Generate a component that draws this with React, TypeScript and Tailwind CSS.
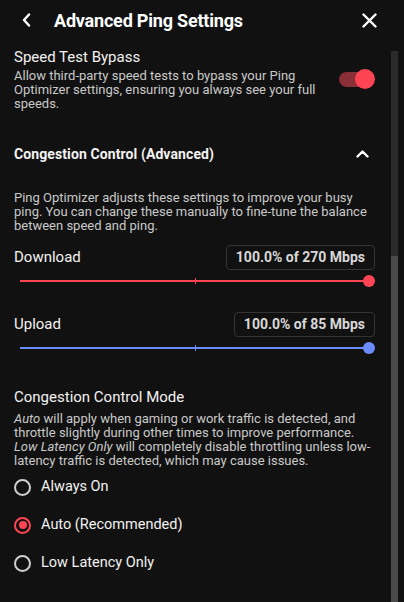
import { useState } from "react";

function Slider({ color }: { color: string }) {
  return (
    <div className="relative mt-[5px] h-[12px] ml-[6px] mr-[8px]">
      <div className="absolute left-0 right-0 top-[5px] h-[2px]" style={{ background: color }} />
      <div className="absolute left-1/2 top-[3px] h-[6px] w-[1px]" style={{ background: color }} />
      <div className="absolute -right-[6px] top-0 h-[12px] w-[12px] rounded-full" style={{ background: color }} />
    </div>
  );
}

function Radio({ label, checked, onClick }: { label: string; checked: boolean; onClick: () => void }) {
  return (
    <button onClick={onClick} className="flex h-[38px] items-center gap-[10px] text-left">
      <span
        className={
          checked
            ? "flex h-[17px] w-[17px] items-center justify-center rounded-full border-2 border-[#ff4554]"
            : "flex h-[17px] w-[17px] items-center justify-center rounded-full border-2 border-[#cfcfcf]"
        }
      >
        {checked && <span className="h-[8px] w-[8px] rounded-full bg-[#ff4554]" />}
      </span>
      <span className="text-[14.5px] text-[#f2f2f2]">{label}</span>
    </button>
  );
}

export default function App() {
  const [mode, setMode] = useState("auto");
  return (
    <div className="flex h-[602px] w-[404px] flex-col overflow-hidden bg-[#121111] font-['Roboto',sans-serif] text-white">
      <div className="flex h-[40px] shrink-0 items-center pl-[22px] pr-[27px]">
        <svg width="9" height="14" viewBox="0 0 9 14" fill="none" stroke="white" strokeWidth="2.4" strokeLinecap="round" strokeLinejoin="round">
          <path d="M7 1.5 L2 7 L7 12.5" />
        </svg>
        <h1 className="ml-[23px] flex-1 text-[18px] font-bold tracking-[-0.2px] text-white">Advanced Ping Settings</h1>
        <svg width="15" height="15" viewBox="0 0 15 15" fill="none" stroke="white" strokeWidth="2.4" strokeLinecap="round">
          <path d="M1.5 1.5 L13.5 13.5 M13.5 1.5 L1.5 13.5" />
        </svg>
      </div>

      <div className="flex min-h-0 flex-1">
        <div className="flex-1 pl-[14px] pr-[14px] pt-[7px]">
          <div className="flex items-center">
            <div className="w-[318px]">
              <div className="text-[15px] leading-[20px] text-[#f2f2f2]">Speed Test Bypass</div>
              <p className="mt-[2px] text-[13px] leading-[14px] text-[#c9c9c9]">
                Allow third-party speed tests to bypass your Ping Optimizer settings, ensuring you always see your full speeds.
              </p>
            </div>
            <div className="relative ml-[7px] h-[20px] w-[38px]">
              <div className="absolute left-0 top-[3px] h-[15px] w-[34px] rounded-full bg-[#8a2e37]" />
              <div className="absolute right-[2px] top-0 h-[20px] w-[20px] rounded-full bg-[#ff4554]" />
            </div>
          </div>

          <div className="mt-[33px] flex items-center justify-between pr-[8px]">
            <div className="text-[14px] font-bold leading-[20px] tracking-[0.1px] text-[#f2f2f2]">Congestion Control (Advanced)</div>
            <svg width="13" height="8" viewBox="0 0 13 8" fill="none" stroke="white" strokeWidth="2.4" strokeLinecap="round" strokeLinejoin="round">
              <path d="M1.5 6.5 L6.5 1.5 L11.5 6.5" />
            </svg>
          </div>

          <p className="mt-[27px] text-[13px] leading-[14px] text-[#c9c9c9]">
            Ping Optimizer adjusts these settings to improve your busy ping. You can change these manually to fine-tune the balance between speed and ping.
          </p>

          <div className="mt-[12px] flex items-center justify-between pr-[2px]">
            <span className="text-[15px] text-[#f2f2f2]">Download</span>
            <span className="flex h-[25px] items-center rounded-[4px] border border-[#343434] px-[9px] text-[14px] font-bold text-[#d8d8d8]">
              100.0% of 270 Mbps
            </span>
          </div>
          <Slider color="#ff4554" />

          <div className="mt-[25px] flex items-center justify-between pr-[2px]">
            <span className="text-[15px] text-[#f2f2f2]">Upload</span>
            <span className="flex h-[25px] items-center rounded-[4px] border border-[#343434] px-[9px] text-[14px] font-bold text-[#d8d8d8]">
              100.0% of 85 Mbps
            </span>
          </div>
          <Slider color="#6c8cfb" />

          <div className="mt-[33px] text-[15px] leading-[20px] text-[#f2f2f2]">Congestion Control Mode</div>
          <p className="mt-[5px] text-[13px] leading-[14px] text-[#c9c9c9]">
            <em>Auto</em> will apply when gaming or work traffic is detected, and throttle slightly during other times to improve performance.{" "}
            <em>Low Latency Only</em> will completely disable throttling unless low-latency traffic is detected, which may cause issues.
          </p>

          <div className="flex flex-col">
            <Radio label="Always On" checked={mode === "on"} onClick={() => setMode("on")} />
            <Radio label="Auto (Recommended)" checked={mode === "auto"} onClick={() => setMode("auto")} />
            <Radio label="Low Latency Only" checked={mode === "low"} onClick={() => setMode("low")} />
          </div>
        </div>

        <div className="mr-[6px] mt-[11px] flex w-[7px] flex-col bg-[#2b2b2b]">
          <div className="mt-[205px] flex-1 bg-[#4a4a4a]" />
        </div>
      </div>
    </div>
  );
}
